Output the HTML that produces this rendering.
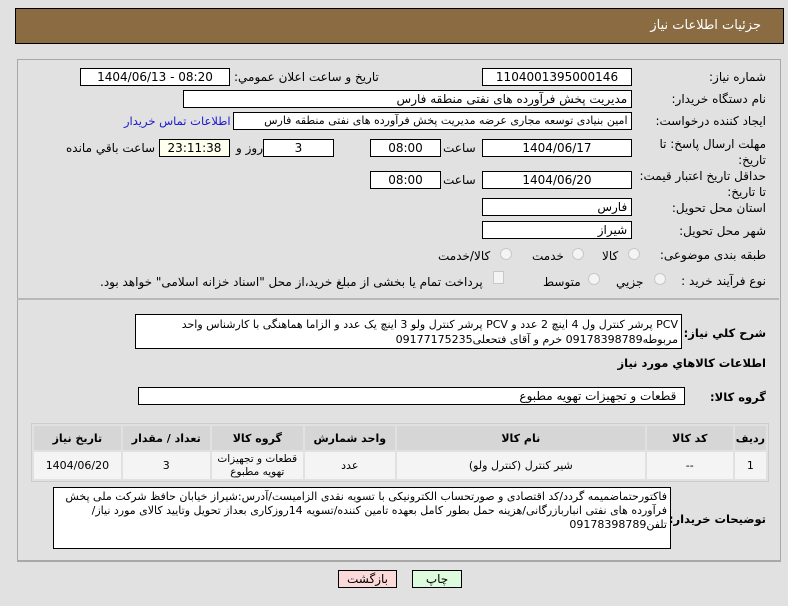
<!DOCTYPE html>
<html><head><meta charset="utf-8"><style>
body{margin:0;width:788px;height:606px;background:#e1e1e1;font-family:"DejaVu Sans","Liberation Sans",sans-serif;font-size:12px;color:#000;position:relative;overflow:hidden}
.a{position:absolute}
.hdr{left:15px;top:8px;width:767px;height:34px;background:#8b6b42;border:1px solid #000}
.hdr span{position:absolute;right:22px;top:9px;color:#fff;font-size:13px}
.panel{left:17px;top:59px;width:762px;height:500px;border:1px solid #a8a8a8;border-bottom:2px solid #a8a8a8}
.in{position:absolute;background:#fff;border:1px solid #000;height:16px;line-height:16px;direction:rtl;white-space:nowrap;overflow:hidden;font-size:12px}
.c{text-align:center;direction:ltr}
.lb{position:absolute;direction:rtl;white-space:nowrap;font-size:12px}
.r{right:22px}
.b{font-weight:bold;font-size:11.5px}
.rad{position:absolute;width:10px;height:10px;border:1px solid #c8c8c8;border-radius:50%;background:#f4f4f4}
table{border-collapse:separate;border-spacing:2px;font-size:11px;direction:rtl}
th{background:#d6d6d6;height:22px;font-weight:bold}
td{background:#f4f4f4;text-align:center;height:27px;padding:0}
.ta{position:absolute;background:#fff;border:1px solid #000;direction:rtl;font-size:11.5px;line-height:15px;padding:2px 3px}
</style></head><body>
<div class="a hdr"><span>جزئیات اطلاعات نیاز</span></div>
<div class="a panel"></div>

<div class="lb" style="right:22px;top:70px">شماره نیاز:</div>
<div class="in c" style="left:482px;top:68px;width:148px">1104001395000146</div>
<div class="lb" style="left:234px;top:70px">تاریخ و ساعت اعلان عمومي:</div>
<div class="in c" style="left:80px;top:68px;width:148px">1404/06/13 - 08:20</div>

<div class="lb r" style="top:92px">نام دستگاه خریدار:</div>
<div class="in" style="left:183px;top:90px;width:447px">&nbsp;مدیریت پخش فرآورده های نفتی منطقه فارس</div>

<div class="lb r" style="top:114px">ایجاد کننده درخواست:</div>
<div class="in" style="left:233px;top:112px;width:397px;font-size:11px">&nbsp;امین بنیادی توسعه مجاری عرضه مدیریت پخش فرآورده های نفتی منطقه فارس</div>
<div class="lb" style="left:124px;top:114px;color:#1a1acc;font-size:11.5px">اطلاعات تماس خریدار</div>

<div class="lb r" style="top:136px;line-height:16px;text-align:right">مهلت ارسال پاسخ: تا<br>تاریخ:</div>
<div class="in c" style="left:482px;top:139px;width:148px">1404/06/17</div>
<div class="lb" style="left:443px;top:141px">ساعت</div>
<div class="in c" style="left:370px;top:139px;width:69px">08:00</div>
<div class="in c" style="left:263px;top:139px;width:69px">3</div>
<div class="lb" style="left:236px;top:141px">روز و</div>
<div class="in c" style="left:159px;top:139px;width:69px;background:#ffffee">23:11:38</div>
<div class="lb" style="left:66px;top:141px">ساعت باقي مانده</div>

<div class="lb r" style="top:168px;line-height:16px;text-align:right">حداقل تاریخ اعتبار قیمت:<br>تا تاریخ:</div>
<div class="in c" style="left:482px;top:171px;width:148px">1404/06/20</div>
<div class="lb" style="left:443px;top:173px">ساعت</div>
<div class="in c" style="left:370px;top:171px;width:69px">08:00</div>

<div class="lb r" style="top:201px">استان محل تحویل:</div>
<div class="in" style="left:482px;top:198px;width:148px">&nbsp;فارس</div>
<div class="lb r" style="top:224px">شهر محل تحویل:</div>
<div class="in" style="left:482px;top:221px;width:148px">&nbsp;شیراز</div>

<div class="lb r" style="top:248px">طبقه بندی موضوعی:</div>
<div class="rad" style="left:628px;top:248px"></div><div class="lb" style="left:602px;top:249px">کالا</div>
<div class="rad" style="left:572px;top:248px"></div><div class="lb" style="left:532px;top:249px">خدمت</div>
<div class="rad" style="left:500px;top:248px"></div><div class="lb" style="left:438px;top:249px">کالا/خدمت</div>

<div class="lb r" style="top:274px">نوع فرآیند خرید :</div>
<div class="rad" style="left:654px;top:273px"></div><div class="lb" style="left:616px;top:275px">جزيي</div>
<div class="rad" style="left:588px;top:273px"></div><div class="lb" style="left:543px;top:275px">متوسط</div>
<div class="a" style="left:493px;top:271px;width:9px;height:11px;border:1px solid #c8c8c8;background:#f4f4f4"></div>
<div class="lb" style="left:100px;top:275px">پرداخت تمام یا بخشی از مبلغ خرید،از محل "اسناد خزانه اسلامی" خواهد بود.</div>

<div class="a" style="left:17px;top:298px;width:762px;border-top:2px solid #b8b8b8"></div>

<div class="lb r b" style="top:326px">شرح کلي نیاز:</div>
<div class="ta" style="left:135px;top:314px;width:539px;height:29px;font-size:11px">PCV پرشر کنترل ول 4 اینچ 2 عدد و PCV پرشر کنترل ولو 3 اینچ یک عدد و الزاما هماهنگی با کارشناس واحد مربوطه09178398789 خرم و آقای فتحعلی09177175235</div>

<div class="lb r b" style="top:356px">اطلاعات کالاهاي مورد نیاز</div>
<div class="lb r b" style="top:390px">گروه کالا:</div>
<div class="in" style="left:138px;top:387px;width:545px">&nbsp;&nbsp;قطعات و تجهیزات تهویه مطبوع</div>

<div class="a" style="left:31px;top:423px;width:736px;border:1px solid #ccc">
<table style="width:736px">
<tr><th style="width:25px">ردیف</th><th style="width:84px">کد کالا</th><th style="width:246px">نام کالا</th><th style="width:88px">واحد شمارش</th><th style="width:89px">گروه کالا</th><th style="width:85px">تعداد / مقدار</th><th>تاریخ نیاز</th></tr>
<tr><td>1</td><td>--</td><td>شیر کنترل (کنترل ولو)</td><td>عدد</td><td style="line-height:13px;font-size:10.5px">قطعات و تجهیزات<br>تهویه مطبوع</td><td>3</td><td>1404/06/20</td></tr>
</table></div>

<div class="lb r b" style="top:512px">توضیحات خریدار:</div>
<div class="ta" style="left:53px;top:487px;width:610px;height:56px;line-height:14px;font-size:11px">فاکتورحتماضمیمه گردد/کد اقتصادی و صورتحساب الکترونیکی با تسویه نقدی الزامیست/آدرس:شیراز خیابان حافظ شرکت ملی پخش فرآورده های نفتی انباربازرگانی/هزینه حمل بطور کامل بعهده تامین کننده/تسویه 14روزکاری بعداز تحویل وتایید کالای مورد نیاز/تلفن09178398789</div>

<div class="a" style="left:338px;top:570px;width:57px;height:16px;border:1px solid #000;background:#fcd9d9;text-align:center;line-height:16px">بازگشت</div>
<div class="a" style="left:412px;top:570px;width:48px;height:16px;border:1px solid #000;background:#ddfbdd;text-align:center;line-height:16px">چاپ</div>
</body></html>
